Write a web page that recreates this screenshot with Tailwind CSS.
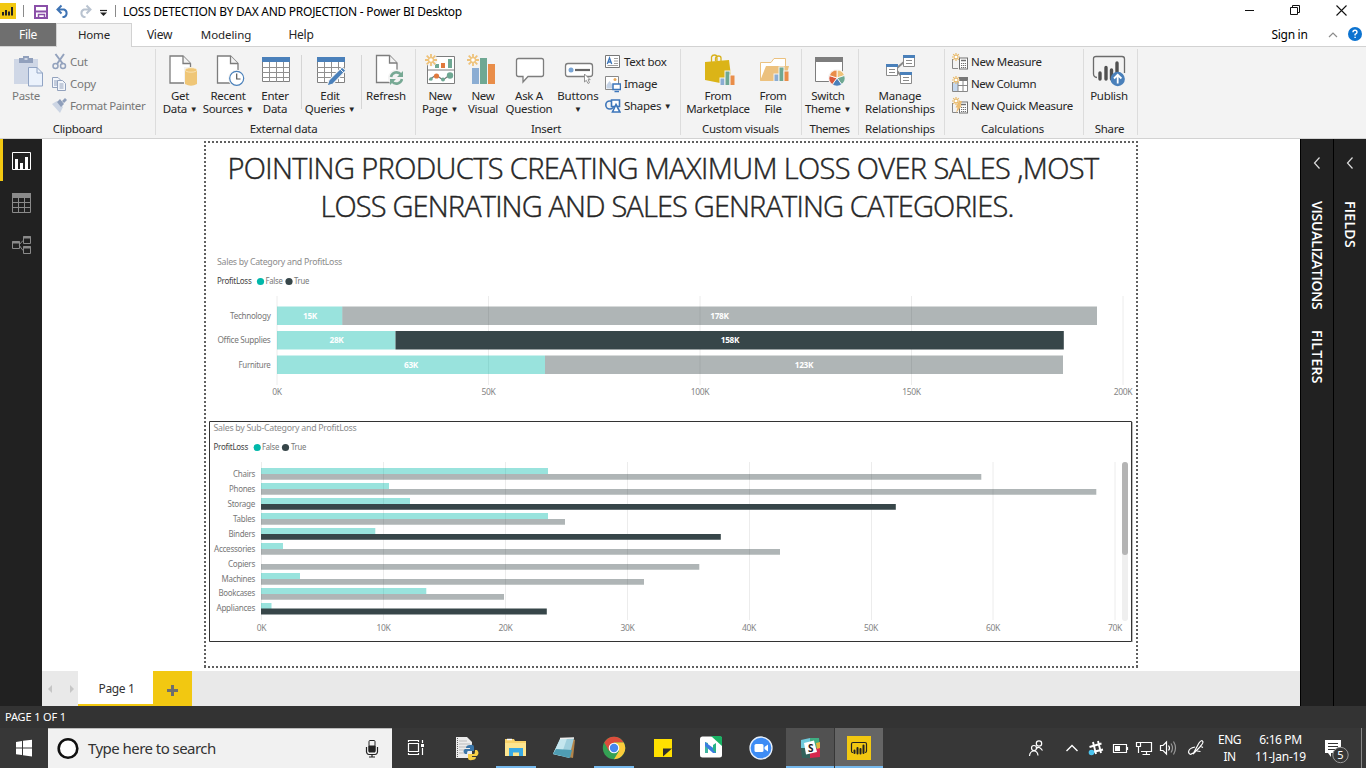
<!DOCTYPE html>
<html lang="en">
<head>
<meta charset="utf-8">
<title>LOSS DETECTION BY DAX AND PROJECTION - Power BI Desktop</title>
<script src="https://cdn.jsdelivr.net/npm/@tailwindcss/browser@4"></script>
</head>
<body class="w-[1366px] h-[768px] overflow-hidden flex flex-col bg-white font-['Noto_Sans','Open_Sans',sans-serif] text-[12px] tracking-[-0.3px] text-[#262626] whitespace-nowrap">

<!-- shared symbols -->
<svg class="hidden">
  <defs>
    <g id="star" stroke="#eec27a" stroke-width="1.8"><path d="M0-6V6M-6 0H6M-4.3-4.3L4.3 4.3M-4.3 4.3L4.3-4.3"/><circle r="2.4" fill="#fff" stroke-width="1.2"/></g>
    <g id="ministar" stroke="#e9b967" stroke-width="1.2"><path d="M0-4V4M-4 0H4M-2.8-2.8L2.8 2.8M-2.8 2.8L2.8-2.8"/><circle r="1.3" fill="#fff" stroke="none"/></g>
    <g id="minibars" stroke="#f3f3f3" stroke-width="1"><rect x="0" y="7" width="5" height="7.5" fill="#8badd3"/><rect x="5" y="0" width="5" height="14.500" fill="#6fa893"/><rect x="10" y="4" width="5" height="10.500" fill="#e98d49"/></g>
    <g id="page" fill="#fff" stroke="#7d7d7d" stroke-width="1.300"><path d="M0 0H13L20.500 7.500V27H0Z"/><path d="M13 0V7.500H20.500" fill="#f3f3f3"/></g>
    <g id="calc"><rect width="8" height="11" fill="#fff" stroke="#707070"/><path d="M1.500 2.500H6.500" stroke="#707070" stroke-width="1.500"/><path d="M1.500 5.500H6.500M1.500 7.500H6.500M1.500 9.500H6.500" stroke="#707070" stroke-dasharray="1.200 .7"/></g>
  </defs>
</svg>

<!-- title bar -->
<header class="h-[23px] flex items-center shrink-0 text-black">
  <svg class="w-[123px] h-[23px]" viewBox="0 0 123 23" fill="none">
    <rect y="3" width="16" height="16" fill="#f2c811"/>
    <path d="M3 12v3.500M6 10v5.500M9 11.500v4M12 7v8.500" stroke="#222" stroke-width="2"/>
    <path d="M23.500 5V17M115.500 5V17" stroke="#8a8a8a"/>
    <path d="M35 6H47V18H35Z" stroke="#8a4fa8" stroke-width="2"/><path d="M36 11.500H46" stroke="#8a4fa8" stroke-width="2"/><path d="M38.500 18V14.500H44.500V18" stroke="#8a4fa8" stroke-width="1.500"/>
    <path d="M57.500 9.500H64A4 4 0 0 1 64 17H62.500M61.500 5.500L57.500 9.500L61.500 13.500" stroke="#3e73b4" stroke-width="2"/>
    <path d="M90.500 9.500H84A4 4 0 0 0 84 17H85.500M86.500 5.500L90.500 9.500L86.500 13.500" stroke="#b9c3d0" stroke-width="2"/>
    <path d="M100 10.500H107" stroke="#222" stroke-width="1.200"/><path d="M100 12.500H107L103.500 16Z" fill="#222"/>
  </svg>
  <div class="w-[400px] tracking-[-0.28px] pt-px">LOSS DETECTION BY DAX AND PROJECTION - Power BI Desktop</div>
  <svg class="ml-auto w-[130px] h-[23px]" viewBox="1236 0 130 23" fill="none" stroke="#111">
    <path d="M1245 10.500H1254"/><path d="M1290.500 7.500H1297.500V14.500H1290.500ZM1292.500 7.500V5.500H1299.500V12.500H1297.500"/><path d="M1336.500 5.500L1346.500 15.500M1346.500 5.500L1336.500 15.500" stroke-width="1.100"/>
  </svg>
</header>

<!-- ribbon tabs -->
<nav class="h-6 flex shrink-0 border-b border-[#d2d2d2] text-center leading-[24px] relative">
  <div class="w-14 h-[23px] bg-[#6f6f6f] text-white">File</div>
  <div class="w-[76px] h-6 bg-[#f3f3f3] border border-b-0 border-[#d2d2d2] leading-[22px] text-[11.5px] tracking-[-0.2px]">Home</div>
  <div class="w-[55px]">View</div>
  <div class="w-[78px] text-[11.5px] tracking-[-0.1px]">Modeling</div>
  <div class="w-[72px]">Help</div>
  <div class="ml-auto flex items-center">
    <span class="w-[37px] text-black">Sign in</span>
    <svg class="w-[58px] h-6" viewBox="1308 23 58 24" fill="none"><path d="M1329 37L1333 33L1337 37" stroke="#8c8c8c" stroke-width="1.200"/><circle cx="1355" cy="34" r="7" fill="#0c73d0"/><path d="M1353 32.300Q1353 30.300 1355 30.300T1357 32.300Q1357 33.500 1355.100 34.300V35.500M1355.100 36.800V38.100" stroke="#fff" stroke-width="1.400"/></svg>
  </div>
</nav>

<!-- ribbon -->
<section class="h-[92px] shrink-0 flex bg-[#f3f3f3] border-b border-[#d2d2d2] pt-0.5 pb-[3px] leading-[13px] text-center text-[11.5px]">
  <div class="w-[156px] border-r border-[#dcdcdc] flex flex-col">
    <div class="flex h-[73px] text-[#777]">
      <div class="w-[52px] pt-[5px] flex flex-col items-center">
        <svg class="w-[34px] h-[34px] shrink-0 ml-1" viewBox="0 0 34 34"><path d="M3 5H27V30H3Z" fill="#cfd7e6"/><path d="M8 4H12V2H18V4H22V9H8Z" fill="#91a0bc"/><path d="M13.500 4h3v2h-3z" fill="#cfd7e6"/><path d="M17.500 13.500H26L31.500 19V32H17.500Z" fill="#ebf2fc" stroke="#91a4c4"/><path d="M26 13.500V19H31.500" fill="none" stroke="#91a4c4"/></svg>
        <div class="mt-px">Paste</div>
      </div>
      <div class="pt-[2px] flex flex-col text-left leading-[22px]">
        <div class="flex h-[22px] items-center"><svg class="w-[18px] h-[18px]" viewBox="0 0 18 18" fill="none" stroke="#93a2bd"><path d="M3.500 1L11 11M12 1L5 11" stroke-width="2"/><circle cx="3.500" cy="13" r="2.500" stroke-width="1.500"/><circle cx="11" cy="13" r="2.500" stroke-width="1.500"/></svg>Cut</div>
        <div class="flex h-[22px] items-center"><svg class="w-[18px] h-[18px]" viewBox="0 0 18 18" fill="#f3f6fb" stroke="#93a2bd"><path d="M.5 2.500H6L9 5.500V12.500H.5Z"/><path d="M2 6H6M2 8H6M2 10H6"/><path d="M5.500 5.500H10.500L13.500 8.500V15.500H5.500Z"/><path d="M7.500 9H11.500M7.500 11H11.500M7.500 13H11.500"/></svg>Copy</div>
        <div class="flex h-[22px] items-center tracking-[-0.4px]"><svg class="w-[18px] h-[18px]" viewBox="0 0 18 18"><path d="M0 7L5 4L11 10L8 16Z" fill="#ccd5e4"/><path d="M5 5L8 2L12 7L9 10ZM10 4L13 1L15 3L12 6Z" fill="#8f9fbb"/></svg>Format Painter</div>
      </div>
    </div>
    <div class="pt-[3px]">Clipboard</div>
  </div>

  <div class="w-[260px] border-r border-[#dcdcdc] flex flex-col">
    <div class="flex h-[73px]">
      <div class="w-12 pt-[5px] flex flex-col items-center"><svg class="w-[34px] h-[34px]" viewBox="0 0 34 34"><use href="#page" x="7" y="2"/><path d="M21 13H34V32H21Z" fill="#f3f3f3"/><path d="M22 16V30Q28 33.500 34 30V16Z" fill="#efc677"/><ellipse cx="28" cy="16" rx="6" ry="2.200" fill="#efc677" stroke="#faeccc" stroke-width=".7"/></svg><div class="mt-px">Get<br>Data <span class="text-[8px] align-[1px]">▼</span></div></div>
      <div class="w-12 pt-[5px] flex flex-col items-center"><svg class="w-[34px] h-[34px]" viewBox="0 0 34 34"><use href="#page" x="6.500" y="2"/><circle cx="25.700" cy="24.300" r="8.500" fill="#f3f3f3"/><circle cx="25.700" cy="24.300" r="7" fill="#fff" stroke="#4a80ba" stroke-width="1.200"/><path d="M25.700 19.500V25H29.500" fill="none" stroke="#555" stroke-width="1.200"/></svg><div class="mt-px">Recent<br>Sources <span class="text-[8px] align-[1px]">▼</span></div></div>
      <div class="w-[46px] pt-[5px] flex flex-col items-center"><svg class="w-[34px] h-[34px]" viewBox="0 0 34 34"><path d="M4.500 3.500H31.500V27.500H4.500Z" fill="#fff" stroke="#808080"/><path d="M4 3H32V8H4Z" fill="#4a80ba"/><path d="M4 13.500H32M4 18.500H32M4 23.500H32M11.500 8V28M18.500 8V28M25.500 8V28" stroke="#909090"/></svg><div class="mt-px">Enter<br>Data</div></div>
      <div class="w-px h-[54px] mt-[6px] bg-[#d5d5d5] ml-[3px]"></div>
      <div class="w-14 pt-[5px] flex flex-col items-center"><svg class="w-[34px] h-[34px]" viewBox="0 0 34 34"><path d="M4.500 3.500H31.500V28.500H4.500Z" fill="#fff" stroke="#808080"/><path d="M4 3H32V8H4Z" fill="#4a80ba"/><path d="M4 13.500H32M4 18.500H32M4 23.500H32M11.500 8V28M18.500 8V28M25.500 8V28" stroke="#909090"/><path d="M14 32L16 26L29 13L33 16.500L20 30Z" fill="#4a80ba" stroke="#f3f3f3" stroke-width="1.200"/><path d="M27 15L31 19" stroke="#f3f3f3"/></svg><div class="mt-px">Edit<br>Queries <span class="text-[8px] align-[1px]">▼</span></div></div>
      <div class="w-px h-[54px] mt-[6px] bg-[#d5d5d5] ml-[3px]"></div>
      <div class="w-12 pt-[5px] flex flex-col items-center"><svg class="w-[34px] h-[34px]" viewBox="0 0 34 34" fill="none"><use href="#page" x="7.500" y="1.500"/><circle cx="27.500" cy="24" r="8.500" fill="#f3f3f3"/><path d="M22 23A5.700 5.700 0 0 1 32 20.500M33 25A5.700 5.700 0 0 1 23 27.500" stroke="#77a994" stroke-width="2.600"/><path d="M34 17V23H28ZM21 31V25H27Z" fill="#77a994"/></svg><div class="mt-px tracking-[-0.2px]">Refresh</div></div>
    </div>
    <div class="pt-[3px] pr-2 ml-1">External data</div>
  </div>

  <div class="w-[265px] border-r border-[#dcdcdc] flex flex-col">
    <div class="flex h-[73px] pl-0.5">
      <div class="w-11 pt-[5px] flex flex-col items-center"><svg class="w-[34px] h-[34px]" viewBox="0 0 34 34" fill="none"><path d="M4.500 2.500H31.500V29.500H4.500Z" fill="#fff" stroke="#7d7d7d"/><path d="M4 16H32" stroke="#7d7d7d"/><path d="M18 9h4v5h-4z" fill="#e0793c"/><path d="M12 10h4v4h-4zM25 5h4v9h-4z" fill="#6fa893"/><path d="M6 26L13 21L20 26L28 20" stroke="#777" stroke-width="1.200"/><circle cx="8" cy="25" r="1.800" fill="#6fa893"/><circle cx="13.500" cy="22" r="2.600" fill="#e0793c"/><circle cx="20" cy="25.500" r="2" fill="#6fa893"/><circle cx="27" cy="21.500" r="3.200" fill="#6fa893"/><circle cx="8" cy="6" r="6.500" fill="#f3f3f3"/><use href="#star" x="8" y="6"/></svg><div class="mt-px">New<br>Page <span class="text-[8px] align-[1px]">▼</span></div></div>
      <div class="w-[42px] pt-[5px] flex flex-col items-center"><svg class="w-[34px] h-[34px]" viewBox="0 0 34 34"><path d="M6 14h7v16h-7z" fill="#8badd3"/><path d="M14 4h7v26h-7z" fill="#6fa893"/><path d="M22 10h7v20h-7z" fill="#e98d49"/><use href="#star" x="7" y="6"/></svg><div class="mt-px">New<br>Visual</div></div>
      <div class="w-[50px] pt-[5px] flex flex-col items-center"><svg class="w-[34px] h-[34px]" viewBox="0 0 34 34"><path d="M6.500 4.500H29.500Q31.500 4.500 31.500 6.500V20.500Q31.500 22.500 29.500 22.500H16L11 28V22.500H6.500Q4.500 22.500 4.500 20.500V6.500Q4.500 4.500 6.500 4.500Z" fill="#fff" stroke="#7d7d7d" stroke-width="1.300"/></svg><div class="mt-px">Ask A<br>Question</div></div>
      <div class="w-12 pt-[5px] flex flex-col items-center"><svg class="w-[34px] h-[34px]" viewBox="0 0 34 34"><rect x="4.500" y="9.500" width="27" height="13" rx="2.500" fill="#fff" stroke="#7d7d7d" stroke-width="1.300"/><circle cx="10" cy="16" r="2.500" fill="#78a4d4"/><path d="M14 16H29" stroke="#666" stroke-width="2.200"/><path d="M23.500 20V28L25.300 26.300L27 29.500L28.500 28.700L27 25.700H29.200Z" fill="#fff" stroke="#888" stroke-width=".9"/></svg><div class="mt-px tracking-[-0.15px]">Buttons<br><span class="text-[8px] align-[1px]">▼</span></div></div>
      <div class="pt-[2px] pl-[3px] flex flex-col text-left leading-[22px]">
        <div class="flex h-[22px] items-center gap-[3px]"><svg class="w-4 h-[18px]" viewBox="0 0 16 18" fill="none"><path d="M.5 2.500H14.500V14.500H.5Z" fill="#fff" stroke="#777"/><path d="M2.300 11L4.500 5L6.700 11M3 9H6" stroke="#3d76ba" stroke-width="1.300"/><path d="M9 5.500H13M9 8H13M2.500 12.500H13M9 10.500H13" stroke="#888" stroke-width=".8"/></svg>Text box</div>
        <div class="flex h-[22px] items-center gap-[3px]"><svg class="w-4 h-[18px]" viewBox="0 0 16 18" fill="none"><path d="M.5 1.500H13.500V14.500H.5Z" fill="#fff" stroke="#888"/><circle cx="10" cy="4.500" r="1.500" fill="#e9a85a"/><path d="M1.500 13.500V10L4.500 6L7.500 10V13.500Z" fill="#c5d3e6"/><path d="M8 9H15.500V14.500H8Z" fill="#fff" stroke="#3d76ba" stroke-width="1.500"/><path d="M9.500 16.500H14" stroke="#3d76ba" stroke-width="1.500"/></svg>Image</div>
        <div class="flex h-[22px] items-center gap-[3px]"><svg class="w-4 h-[18px]" viewBox="0 0 16 18" fill="none" stroke="#3d76ba" stroke-width="1.600"><circle cx="4.800" cy="8" r="4"/><path d="M6.500 3H14.500V9.500H6.500Z" fill="#fff"/><path d="M11 7.500L15 15H7.500Z" fill="#fff"/></svg><span>Shapes <span class="text-[8px] align-[1px]">▼</span></span></div>
      </div>
    </div>
    <div class="pt-[3px] pr-1 tracking-[-0.3px]">Insert</div>
  </div>

  <div class="w-[121px] border-r border-[#dcdcdc] flex flex-col">
    <div class="flex h-[73px]">
      <div class="w-[74px] pt-[5px] flex flex-col items-center"><svg class="w-[34px] h-[34px]" viewBox="0 0 34 34" fill="none"><path d="M10.500 8V3Q11 1 13.500 1T16 3.500V7M14.500 7V4Q15 2 17.500 2T20 4V7" stroke="#d8b11c" stroke-width="1.300"/><path d="M4 8L28 6L30 22L19 29L4 26Z" fill="#dbb417"/><use href="#minibars" x="19" y="17"/></svg><div class="mt-px">From<br>Marketplace</div></div>
      <div class="w-9 pt-[5px] flex flex-col items-center"><svg class="w-[34px] h-[34px]" viewBox="0 0 34 34"><path d="M4.500 26.500V8.500H15L18 4.500H29.500V13" fill="#fff" stroke="#ebc17f"/><path d="M4 27L10 12H33L29 27Z" fill="#ecc17e"/><use href="#minibars" x="18" y="13"/></svg><div class="mt-px">From<br>File</div></div>
    </div>
    <div class="pt-[3px] pr-2 ml-[7px] tracking-[-0.3px]">Custom visuals</div>
  </div>

  <div class="w-[57px] border-r border-[#dcdcdc] flex flex-col">
    <div class="flex h-[73px]">
      <div class="w-[52px] pt-[5px] flex flex-col items-center"><svg class="w-[34px] h-[34px]" viewBox="0 0 34 34"><path d="M4.500 3.500H31.500V27.500H4.500Z" fill="#fff" stroke="#7d7d7d"/><path d="M4 3H32V8H4Z" fill="#7d7d7d"/><circle cx="26" cy="24" r="9" fill="#f3f3f3"/><g stroke="#fff" stroke-width=".8"><path d="M26 24V16A8 8 0 0 1 33.600 21.500Z" fill="#eec27a"/><path d="M26 24L33.600 21.500A8 8 0 0 1 30.700 30.500Z" fill="#6fa893"/><path d="M26 24L30.700 30.500A8 8 0 0 1 21.300 30.500Z" fill="#4a80ba"/><path d="M26 24L21.300 30.500A8 8 0 0 1 18.400 21.500Z" fill="#d9583b"/><path d="M26 24L18.400 21.500A8 8 0 0 1 26 16Z" fill="#e98d49"/></g></svg><div class="mt-px">Switch<br>Theme <span class="text-[8px] align-[1px]">▼</span></div></div>
    </div>
    <div class="pt-[3px] pr-px tracking-[-0.45px]">Themes</div>
  </div>

  <div class="w-[86px] border-r border-[#dcdcdc] flex flex-col tracking-[-0.2px]">
    <div class="flex h-[73px] pr-px">
      <div class="w-[82px] pt-[5px] flex flex-col items-center"><svg class="w-[34px] h-[34px]" viewBox="0 0 34 34" fill="#fff" stroke="#8a8a8a"><path d="M14 14L22 7M14 17L20 24" stroke-width="2"/><path d="M3.500 10.500H14.500V21.500H3.500Z"/><path d="M20.500 1.500H31.500V12.500H20.500Z"/><path d="M17.500 18.500H28.500V29.500H17.500Z"/><path d="M3 11.500H15M20 2.500H32M17 19.500H29" stroke="#4a80ba" stroke-width="3"/><path d="M6 15.500H12M6 18.500H12M23 6.500H29M23 9.500H29M20 23.500H26M20 26.500H26"/></svg><div class="mt-px">Manage<br>Relationships</div></div>
    </div>
    <div class="pt-[3px] pr-[3px]">Relationships</div>
  </div>

  <div class="w-[139px] border-r border-[#dcdcdc] flex flex-col">
    <div class="h-[73px] pt-[2px] pl-[7px] flex flex-col text-left leading-[22px]">
      <div class="flex h-[22px] items-center gap-[2px]"><svg class="w-[17px] h-[18px]" viewBox="0 0 17 18" fill="none"><path d="M.5 6V15.500H6" stroke="#888"/><use href="#ministar" x="4" y="4"/><use href="#calc" x="7.500" y="5"/></svg>New Measure</div>
      <div class="flex h-[22px] items-center gap-[2px] tracking-[-0.4px]"><svg class="w-[17px] h-[18px]" viewBox="0 0 17 18" fill="none"><path d="M.5 4.500H15.500V16.500H.5Z" fill="#fff"/><path d="M1 7h5v10H1z" fill="#c5d8ee"/><path d="M7 2h9v4H7z" fill="#777"/><path d="M.5 7V16.500H15.500V5M6 6V17M11 6V17M6 10.500H16" stroke="#888"/><use href="#ministar" x="4" y="5"/></svg>New Column</div>
      <div class="flex h-[22px] items-center gap-[2px] tracking-[-0.35px]"><svg class="w-[17px] h-[18px]" viewBox="0 0 17 18" fill="none"><path d="M.5 6V15.500H6" stroke="#888"/><use href="#calc" x="7.500" y="5"/><path d="M7 4H10L8.500 8.500H10L4 16L5.500 10.500H3.500Z" fill="#ecbd73"/><use href="#ministar" x="4" y="4"/></svg>New Quick Measure</div>
    </div>
    <div class="pt-[3px] pr-[3px] tracking-[-0.2px]">Calculations</div>
  </div>

  <div class="w-[54px] border-r border-[#dcdcdc] flex flex-col">
    <div class="flex h-[73px]">
      <div class="w-[50px] pt-[5px] flex flex-col items-center"><svg class="w-[34px] h-[34px]" viewBox="0 0 34 34" fill="none"><path d="M5 23.500Q1.500 23 1.500 20V4.500Q1.500 2.500 4 2.500H30Q32.500 2.500 32.500 5V19" stroke="#6b6b6b" stroke-width="1.300"/><path d="M8 19V25M14 13.500V25M19.500 16V25M25 9V20" stroke="#505050" stroke-width="3.400" stroke-linecap="round"/><circle cx="25.700" cy="25" r="7.200" fill="#4a80ba"/><path d="M25.700 29.500V21M22 24.500L25.700 20.800L29.400 24.500" stroke="#fff" stroke-width="1.800"/></svg><div class="mt-px">Publish</div></div>
    </div>
    <div class="pt-[3px] pr-[2px]">Share</div>
  </div>
</section>

<!-- workspace -->
<div class="h-[567px] shrink-0 flex bg-[#212121]">
  <aside class="w-[42px] shrink-0">
    <svg class="w-[42px] h-[130px]" viewBox="0 139 42 130" fill="none"><path d="M0 139h3v42H0z" fill="#f2c811"/><path d="M12.500 152.500H30.500V169.500H12.500Z" stroke="#fff"/><path d="M15 159h3v10h-3zM20 163h3v6h-3zM25 157h3v12h-3z" fill="#fff"/><path d="M12.500 194.500H30.500V212.500H12.500ZM12 202.500H31M12 207.500H31M18.500 198V213M24.500 198V213" stroke="#8a8a8a"/><path d="M12 193h19v5H12z" fill="#8a8a8a"/><path d="M12.500 241.500H19.500V248.500H12.500ZM23.500 236.500H30.500V243.500H23.500ZM23.500 246.500H30.500V253.500H23.500Z" stroke="#8a8a8a"/><path d="M12 242.500H20M23 237.500H31M23 247.500H31" stroke="#8a8a8a" stroke-width="2"/><path d="M19 245L23 240.500M19 245L23 250.500" stroke="#8a8a8a"/></svg>
  </aside>

  <main class="w-[1258px] flex flex-col">
    <div class="h-[532px] bg-white pl-[162px] pt-[2px]">
      <!-- report page -->
      <div class="w-[934px] h-[527px] relative">
        <svg class="absolute inset-0 w-full h-full" viewBox="0 0 934 527" fill="none" stroke="#606060" stroke-width="2" stroke-dasharray="2 2" shape-rendering="crispEdges"><path d="M0 1H934M1 4V526M933 4V526M0 526H934"/></svg>
        <h1 class="h-[108px] pt-[8px] text-center text-[29px] leading-[38px] font-light font-['Open_Sans'] tracking-[-0.62px] [-webkit-text-stroke:0.45px_#262626] text-[#262626] pr-[16px]">POINTING PRODUCTS CREATING MAXIMUM LOSS OVER SALES ,MOST<br><span class="ml-2 tracking-[-0.85px]">LOSS GENRATING AND SALES GENRATING CATEGORIES.</span></h1>
        <svg class="w-[934px] h-[160px] block" viewBox="204 249 934 160" font-size="8.5" fill="#777">
          <text x="217" y="265" font-size="9.5" fill="#8c8c8c" textLength="125" lengthAdjust="spacingAndGlyphs">Sales by Category and ProfitLoss</text>
          <text x="217" y="284.400" fill="#444" textLength="34.500" lengthAdjust="spacingAndGlyphs">ProfitLoss</text>
          <circle cx="260.500" cy="281.500" r="3.600" fill="#01b8aa"/><text x="265.500" y="284.400" textLength="17" lengthAdjust="spacingAndGlyphs">False</text>
          <circle cx="289" cy="281.500" r="3.600" fill="#374649"/><text x="294" y="284.400" textLength="15" lengthAdjust="spacingAndGlyphs">True</text>
          <path d="M277 296V385M488.500 296V385M700 296V385M911.500 296V385M1123 296V385" stroke="#ececec"/>
          <g fill="#01b8aa" fill-opacity=".4"><path d="M277 306.500H342.300V325H277ZM277 331H395.500V349.500H277ZM277 355.500H545V374H277Z"/></g>
          <g fill="#374649" fill-opacity=".4"><path d="M342.300 306.500H1097V325H342.300ZM545 355.500H1063V374H545Z"/></g>
          <path d="M395.500 331H1063.800V349.500H395.500Z" fill="#374649"/>
          <g text-anchor="end"><text x="270.500" y="319.400" textLength="40.500" lengthAdjust="spacingAndGlyphs">Technology</text><text x="270.500" y="343.400" textLength="53" lengthAdjust="spacingAndGlyphs">Office Supplies</text><text x="270.500" y="368.400" textLength="32" lengthAdjust="spacingAndGlyphs">Furniture</text></g>
          <g text-anchor="middle" fill="#fff" font-weight="bold"><text x="310" y="319" textLength="14" lengthAdjust="spacingAndGlyphs">15K</text><text x="336.500" y="343" textLength="14" lengthAdjust="spacingAndGlyphs">28K</text><text x="411" y="368" textLength="14" lengthAdjust="spacingAndGlyphs">63K</text><text x="719.500" y="319" textLength="18.500" lengthAdjust="spacingAndGlyphs">178K</text><text x="730" y="343" textLength="18.500" lengthAdjust="spacingAndGlyphs">158K</text><text x="804" y="368" textLength="18.500" lengthAdjust="spacingAndGlyphs">123K</text></g>
          <g text-anchor="middle" fill="#858585"><text x="277" y="395.400">0K</text><text x="488.500" y="395.400">50K</text><text x="700" y="395.400">100K</text><text x="911.500" y="395.400">150K</text><text x="1123" y="395.400">200K</text></g>
        </svg>
        <svg class="w-[934px] h-[240px] block" viewBox="204 409 934 240" font-size="8.5" fill="#777">
          <path d="M209.500 421.500H1131.500V641.500H209.500Z" fill="#fff" stroke="#333"/><path d="M1132.500 422V642" stroke="#bbb"/>
          <text x="213.500" y="431" font-size="9.5" fill="#8c8c8c" textLength="143" lengthAdjust="spacingAndGlyphs">Sales by Sub-Category and ProfitLoss</text>
          <text x="213.500" y="450.400" fill="#444" textLength="34.500" lengthAdjust="spacingAndGlyphs">ProfitLoss</text>
          <circle cx="257.200" cy="447.500" r="3.600" fill="#01b8aa"/><text x="262" y="450.400" textLength="17" lengthAdjust="spacingAndGlyphs">False</text>
          <circle cx="285.500" cy="447.500" r="3.600" fill="#374649"/><text x="291" y="450.400" textLength="15" lengthAdjust="spacingAndGlyphs">True</text>
          <path d="M261.500 462V620M383.500 462V620M505.500 462V620M627.500 462V620M749.500 462V620M871.500 462V620M993 462V620M1115 462V620" stroke="#ececec"/>
          <path fill="#01b8aa" fill-opacity=".4" d="M261 468H548V474H261ZM261 483H389V489H261ZM261 498H410V504H261ZM261 513H548V519H261ZM261 528H375.300V534H261ZM261 543H283V549H261ZM261 573H300V579H261ZM261 588H426.300V594H261ZM261 603H271.500V609H261Z"/>
          <path fill="#374649" fill-opacity=".4" d="M261 474H981.300V479.800H261ZM261 489H1096.300V494.800H261ZM261 519H565V524.800H261ZM261 549H780V554.800H261ZM261 564H699.300V569.800H261ZM261 579H644V584.800H261ZM261 594H504V599.800H261Z"/>
          <path fill="#374649" d="M261 504H895.800V509.800H261ZM261 534H720.800V539.800H261ZM261 608.500H546.800V614.500H261Z"/>
          <g text-anchor="end"><text x="255" y="477.400" textLength="22" lengthAdjust="spacingAndGlyphs">Chairs</text><text x="255" y="492.400" textLength="26" lengthAdjust="spacingAndGlyphs">Phones</text><text x="255" y="507.400" textLength="27.500" lengthAdjust="spacingAndGlyphs">Storage</text><text x="255" y="522.400" textLength="22" lengthAdjust="spacingAndGlyphs">Tables</text><text x="255" y="537.400" textLength="26.500" lengthAdjust="spacingAndGlyphs">Binders</text><text x="255" y="552.400" textLength="41" lengthAdjust="spacingAndGlyphs">Accessories</text><text x="255" y="567.400" textLength="27" lengthAdjust="spacingAndGlyphs">Copiers</text><text x="255" y="582.400" textLength="33.500" lengthAdjust="spacingAndGlyphs">Machines</text><text x="255" y="596.400" textLength="36.500" lengthAdjust="spacingAndGlyphs">Bookcases</text><text x="255" y="611.400" textLength="38.500" lengthAdjust="spacingAndGlyphs">Appliances</text></g>
          <g text-anchor="middle" fill="#858585"><text x="261.500" y="631.400">0K</text><text x="383.500" y="631.400">10K</text><text x="505.500" y="631.400">20K</text><text x="627.500" y="631.400">30K</text><text x="749" y="631.400">40K</text><text x="871" y="631.400">50K</text><text x="993" y="631.400">60K</text><text x="1115" y="631.400">70K</text></g>
          <rect x="1122" y="462" width="6" height="159" rx="3" fill="#efefef"/><rect x="1122" y="462" width="6" height="93" rx="3" fill="#b4b4b4"/>
        </svg>
      </div>
    </div>
    <div class="h-[35px] bg-[#e9e9e9] flex">
      <svg class="w-9 h-[35px]" viewBox="0 0 36 35" fill="#c6c6c6"><path d="M10 14V22L6 18ZM28 14V22L32 18Z"/></svg>
      <div class="w-[75px] bg-white border-b-2 border-[#f2c811] text-center leading-[35px] pl-0.5 text-[#333] tracking-[-0.35px]">Page 1</div>
      <svg class="w-[39px] h-[35px] bg-[#f2c811]" viewBox="0 0 39 35"><path d="M14 19.500H25M19.500 14V25" stroke="#6e6e6e" stroke-width="3"/></svg>
    </div>
  </main>

  <aside class="w-[33px] border-l border-black text-white text-[14px] font-semibold font-['Open_Sans'] flex flex-col items-center">
    <svg class="w-[10px] h-4 mt-4" viewBox="0 0 10 16" fill="none" stroke="#ddd" stroke-width="1.200"><path d="M7.500 2.500L2.500 8L7.500 13.500"/></svg>
    <div class="[writing-mode:vertical-rl] mt-[30px] h-[129px] leading-[16px] tracking-[-0.2px]">VISUALIZATIONS</div>
    <div class="[writing-mode:vertical-rl] leading-[16px] tracking-[0.3px]">FILTERS</div>
  </aside>
  <aside class="w-[33px] border-l border-black text-white text-[14px] font-semibold font-['Open_Sans'] flex flex-col items-center">
    <svg class="w-[10px] h-4 mt-4" viewBox="0 0 10 16" fill="none" stroke="#ddd" stroke-width="1.200"><path d="M7.500 2.500L2.500 8L7.500 13.500"/></svg>
    <div class="[writing-mode:vertical-rl] mt-[30px] leading-[16px] tracking-[0.3px]">FIELDS</div>
  </aside>
</div>

<!-- status bar -->
<div class="h-[22px] shrink-0 bg-[#333] text-white text-[11px] leading-[22px] pl-[5px] tracking-[-0.15px]">PAGE 1 OF 1</div>

<!-- taskbar -->
<footer class="h-10 shrink-0 bg-[#373737] flex text-white">
  <svg class="w-12 h-10" viewBox="0 728 48 40" fill="#fff"><path d="M16 742L22 741V747.500H16ZM23 740.800L32 739.700V747.500H23ZM16 748.500H22V755L16 754.200ZM23 748.500H32V756.400L23 755.200Z"/></svg>
  <div class="w-[344px] bg-[#f1f1f1] border-t border-[#bbb] flex items-center text-[#333] text-[15px] tracking-[-0.55px]">
    <svg class="w-[40px] h-10" viewBox="0 0 40 40"><circle cx="20" cy="19.500" r="9.300" fill="#fff" stroke="#111" stroke-width="2.600"/></svg>
    <span class="flex-1">Type here to search</span>
    <svg class="w-10 h-10" viewBox="0 0 40 40" fill="none" stroke="#222"><rect x="17" y="11.500" width="6" height="11" rx="1"/><path d="M17 17h6v6h-6z" fill="#222"/><path d="M14.500 18V23Q15 25.500 17 25.500H23Q25 25.500 25.500 23V18M20 26V28M17 28H23" stroke-width="1.200"/></svg>
  </div>
  <div class="flex gap-px pl-0.5">
    <svg class="w-12 h-10" viewBox="0 0 48 40" fill="none" stroke="#fff" stroke-width="1.200"><path d="M14.500 15.500H24.500V23.500H14.500ZM14.500 12V14M24.500 12V14M14.500 27V25M24.500 27V25M14 12.500H25M14 26.500H25M28.500 12V15M28.500 20V27"/><path d="M27 16h3v3h-3z" fill="#fff" stroke="none"/></svg>
    <svg class="w-12 h-10" viewBox="0 0 48 40"><path d="M13 9H24L29 14V30H13Z" fill="#ececec"/><path d="M14.500 10V30" stroke="#666" stroke-dasharray="1 1"/><path d="M16 13H24M16 16H27M16 19H27M16 22H24M16 25H22" stroke="#bbb"/><path d="M27 17Q31 16 31 19V23H25Q24 23 24 26H22Q19 23 22 21H27V20H23Q23 17 27 17Z" fill="#3a75a8"/><path d="M29 32Q25 33 25 30V26H31Q32 26 32 22H34Q37 25 34 28H29V29H33Q33 32 29 32Z" fill="#f7cf46"/></svg>
    <div class="w-12 h-10 relative"><svg class="w-12 h-10" viewBox="0 0 48 40"><path d="M13 13V11H22L23 13H34V28H13Z" fill="#f9d36a"/><path d="M13 15H34V28H13Z" fill="#fde58f"/><path d="M15 11.500H20" stroke="#fff" stroke-width="1.500"/><path d="M17 28V20H31V28H27V24.500H21V28Z" fill="#38a9e4"/></svg><div class="absolute left-1 bottom-0 w-10 h-0.5 bg-[#76b9ed]"></div></div>
    <svg class="w-12 h-10" viewBox="0 0 48 40"><path d="M30 10L34 12L32 30L27 29Z" fill="#b3854b"/><path d="M19 11L33 10L28 30L12 26Z" fill="#9fcfdd"/><path d="M19 11L26 10.500L20 28L12 26Z" fill="#c5e6ee"/><path d="M15 21L31 22L29 30L12 26Z" fill="#4f9db3"/><path d="M19 10.500L33 10" stroke="#eee" stroke-width="1.500"/></svg>
    <div class="w-12 h-10 relative"><svg class="w-12 h-10" viewBox="0 0 48 40"><circle cx="24" cy="20" r="11.200" fill="#35a154"/><path d="M24 20L14.300 14.400A11.200 11.200 0 0 1 33.700 14.400H24Z" fill="#dc4d3c"/><path d="M24 14.400H33.700A11.200 11.200 0 0 1 24 31.200L29 23Z" fill="#fbcb3b"/><path d="M14.300 14.400L19 23L24 20V14.400Z" fill="#dc4d3c"/><circle cx="24" cy="20" r="5.300" fill="#fff"/><circle cx="24" cy="20" r="4.200" fill="#4887ee"/></svg><div class="absolute left-1 bottom-0 w-10 h-0.5 bg-[#76b9ed]"></div></div>
    <svg class="w-12 h-10" viewBox="0 0 48 40"><path d="M15 11H33V29H15Z" fill="#ffe000"/><path d="M24 28.500V20.500H33Z" fill="#2d2d2d"/></svg>
    <svg class="w-12 h-10" viewBox="0 0 48 40"><rect x="12" y="8.500" width="22" height="21" rx="2.500" fill="#fff"/><path d="M23 8H32Q34 8 34 10V18Z" fill="#19b264"/><path d="M17 25V14L20 15V25Z" fill="#3fb6a0"/><path d="M17 14L28 22V25L25 25L17 18Z" fill="#3b7de0"/><path d="M25 17L28 15V25L25 22Z" fill="#28b487"/></svg>
    <svg class="w-12 h-10" viewBox="0 0 48 40"><circle cx="24" cy="20" r="11" fill="#3d8cf5" stroke="#e9f1fc" stroke-width="1.300"/><rect x="17.500" y="16" width="9" height="8" rx="1.500" fill="#fff"/><path d="M27.500 19L31 16.500V23.500L27.500 21Z" fill="#fff"/></svg>
    <div class="w-12 h-10 bg-[#515151] relative"><svg class="w-12 h-10" viewBox="0 0 48 40"><path d="M15 12L24 10L24 20H15Z" fill="#6ecadc"/><path d="M24 10H33L34 20H24Z" fill="#3fae82"/><path d="M15 20H24V30H16Z" fill="#33625a"/><path d="M24 20H34V29L24 30Z" fill="#d6264e"/><path d="M30 15L34 14V20L31 21Z" fill="#e6b13d"/><path d="M18 15L28 12.500L31 24L20 26.500Z" fill="#fff"/><text x="24.500" y="23.500" text-anchor="middle" font-size="10" font-weight="bold" fill="#222">S</text></svg><div class="absolute left-0 bottom-0 w-12 h-0.5 bg-[#76b9ed]"></div></div>
    <div class="w-12 h-10 bg-[#656565] relative"><svg class="w-12 h-10" viewBox="0 0 48 40"><path d="M12 8H36V32H12Z" fill="#f2c811"/><path d="M18 24.500H17.500Q16.500 24.500 16.500 23V16Q16.500 14.500 18 14.500H30Q31.500 14.500 31.500 16V23Q31.500 24.500 30 24.500" fill="none" stroke="#222" stroke-width="1.200"/><path d="M19.500 22.500V25M22.500 20V25.500M25.500 21V25.500M28.500 17.500V25" stroke="#222" stroke-width="2" stroke-linecap="round"/></svg><div class="absolute left-0 bottom-0 w-12 h-0.5 bg-[#76b9ed]"></div></div>
  </div>
  <div class="ml-auto flex">
    <svg class="w-[196px] h-10" viewBox="1014 728 196 40" fill="none" stroke="#fff" stroke-width="1.200">
      <circle cx="1039" cy="743.500" r="2.700"/><path d="M1036.500 748.500Q1039 745.500 1042.500 750.500"/><circle cx="1034" cy="748" r="2.500"/><path d="M1029.500 756Q1030 751 1034 751Q1037.500 751 1038 755.500"/>
      <path d="M1066.500 751L1072 745.500L1077.500 751" stroke-width="1.400"/>
      <path d="M1093 742L1096 754M1098 741L1101 753M1089.500 747L1101.500 743.500M1091 752.500L1103 749.500" stroke-width="1.900"/><circle cx="1091.500" cy="752.500" r="2.800" fill="#4bc4ee" stroke="none"/>
      <path d="M1113.500 744.500H1126.500V752.500H1113.500ZM1127.500 747V750"/><path d="M1115 746H1120V751H1115Z" fill="#fff" stroke="none"/>
      <path d="M1138.500 742.500H1151.500V751.500H1141M1146.500 752V754.500M1142.500 754.500H1150M1136.500 742.500H1140.500V746.500H1136.500ZM1138.500 746.500V753"/>
      <path d="M1160.500 745.500H1163L1166.500 742V754L1163 750.500H1160.500Z"/><path d="M1168.500 745.500Q1170.500 748 1168.500 750.500"/><path d="M1171 743.500Q1174 748 1171 752.500M1173.500 741.500Q1177.500 748 1173.500 754.500" stroke="#999"/>
      <path d="M1193 754L1199 743Q1202 739 1203 742Q1203 744 1197 750L1193 754ZM1195 747Q1189 748 1188.500 752Q1189.500 756 1193 753M1197 751L1200.500 751.500M1200 746L1203 747.500" stroke-width="1.200"/>
    </svg>
    <div class="w-[39px] text-center leading-[17px] pt-[3px] tracking-[-0.5px]">ENG<br>IN</div>
    <div class="w-[63px] text-center leading-[17px] pt-[3px] tracking-[-0.4px]">6:16 PM<br><span class="tracking-[-0.2px]">11-Jan-19</span></div>
    <svg class="w-[54px] h-10" viewBox="1312 728 54 40"><path d="M1325 740H1341V753H1331V757L1328 753H1325Z" fill="#fff"/><path d="M1328 743.500H1338M1328 746.500H1338M1328 749.500H1335" stroke="#333"/><circle cx="1340.500" cy="755" r="7.700" fill="#373737" stroke="#999"/><text x="1340.500" y="759" font-size="11" fill="#fff" text-anchor="middle" letter-spacing="0">5</text><path d="M1361.500 728V768" stroke="#888"/></svg>
  </div>
</footer>
</body>
</html>
